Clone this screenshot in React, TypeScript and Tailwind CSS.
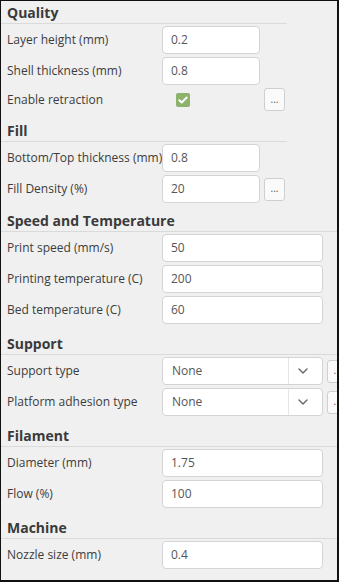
import React from 'react';

type Row =
  | { kind: 'input'; label: string; value: string; more?: boolean }
  | { kind: 'check'; label: string; more?: boolean }
  | { kind: 'select'; label: string; value: string; more?: boolean };

interface Section {
  title: string;
  narrow?: boolean;
  gap: string;
  rows: Row[];
}

const sections: Section[] = [
  {
    title: 'Quality',
    narrow: true,
    gap: '',
    rows: [
      { kind: 'input', label: 'Layer height (mm)', value: '0.2' },
      { kind: 'input', label: 'Shell thickness (mm)', value: '0.8' },
      { kind: 'check', label: 'Enable retraction', more: true },
    ],
  },
  {
    title: 'Fill',
    narrow: true,
    gap: 'mt-[8px]',
    rows: [
      { kind: 'input', label: 'Bottom/Top thickness (mm)', value: '0.8' },
      { kind: 'input', label: 'Fill Density (%)', value: '20', more: true },
    ],
  },
  {
    title: 'Speed and Temperature',
    gap: 'mt-[6px]',
    rows: [
      { kind: 'input', label: 'Print speed (mm/s)', value: '50' },
      { kind: 'input', label: 'Printing temperature (C)', value: '200' },
      { kind: 'input', label: 'Bed temperature (C)', value: '60' },
    ],
  },
  {
    title: 'Support',
    gap: 'mt-[8px]',
    rows: [
      { kind: 'select', label: 'Support type', value: 'None', more: true },
      { kind: 'select', label: 'Platform adhesion type', value: 'None', more: true },
    ],
  },
  {
    title: 'Filament',
    gap: 'mt-[8px]',
    rows: [
      { kind: 'input', label: 'Diameter (mm)', value: '1.75' },
      { kind: 'input', label: 'Flow (%)', value: '100' },
    ],
  },
  {
    title: 'Machine',
    gap: 'mt-[8px]',
    rows: [{ kind: 'input', label: 'Nozzle size (mm)', value: '0.4' }],
  },
];

const MoreButton = () => (
  <button className="ml-[4px] w-[21px] h-[23px] shrink-0 rounded-[3px] border border-[#cfcfcf] bg-[#fafafa] text-[10px] leading-none text-[#555] flex items-center justify-center pb-[2px]">
    ...
  </button>
);

const Chevron = () => (
  <svg width="10" height="6" viewBox="0 0 10 6" fill="none">
    <path d="M1 1l4 4 4-4" stroke="#666" strokeWidth="1.4" strokeLinecap="round" strokeLinejoin="round" />
  </svg>
);

const Field = ({ row, narrow }: { row: Row; narrow?: boolean }) => {
  const w = narrow ? 'w-[98px]' : 'w-[161px]';
  if (row.kind === 'check') {
    return (
      <div className="flex items-center h-[23px]">
        <div className={`${w} flex items-center`}>
          <span className="ml-[14px] w-[14px] h-[14px] rounded-[2px] bg-[#8db26c] flex items-center justify-center">
            <svg width="10" height="8" viewBox="0 0 10 8" fill="none">
              <path d="M1.3 4.2l2.4 2.3L8.7 1.5" stroke="#fff" strokeWidth="1.9" strokeLinecap="round" strokeLinejoin="round" />
            </svg>
          </span>
        </div>
        {row.more && <MoreButton />}
      </div>
    );
  }
  if (row.kind === 'select') {
    return (
      <div className="flex items-center">
        <div className={`${w} h-[28px] shrink-0 rounded-[4px] border border-[#d4d4d4] bg-white flex items-center`}>
          <span className="flex-1 pl-[9px] text-[12px] text-[#555]">{row.value}</span>
          <span className="w-[34px] h-full border-l border-[#e6e6e6] flex items-center justify-center pr-[5px]">
            <Chevron />
          </span>
        </div>
        {row.more && <MoreButton />}
      </div>
    );
  }
  return (
    <div className="flex items-center">
      <div className={`${w} h-[28px] shrink-0 rounded-[4px] border border-[#d4d4d4] bg-white flex items-center pl-[8px] text-[12px] text-[#555]`}>
        {row.value}
      </div>
      {row.more && <MoreButton />}
    </div>
  );
};

export default function App() {
  return (
    <div
      className="w-[339px] h-[582px] overflow-hidden bg-[#f0f0f0] border-t border-l border-r-2 border-b-2 border-[#111]"
      style={{ fontFamily: '"Open Sans", "Noto Sans", sans-serif' }}
    >
      <div className="w-[336px]">
        {sections.map(s => (
          <div key={s.title} className={`${s.narrow ? 'w-[286px]' : 'w-[336px]'} ${s.gap}`}>
            <div className="h-[23px] border-b border-[#dadada] pl-[6px] flex items-center text-[14px] font-bold text-[#3a3a3a]">
              {s.title}
            </div>
            <div className="pt-[2px] flex flex-col gap-[3px]">
              {s.rows.map(r => (
                <div key={r.label} className="flex items-center">
                  <div className="w-[161px] shrink-0 pl-[6px] text-[12px] text-[#3c3c3c] whitespace-nowrap">{r.label}</div>
                  <Field row={r} narrow={s.narrow} />
                </div>
              ))}
            </div>
          </div>
        ))}
      </div>
    </div>
  );
}
